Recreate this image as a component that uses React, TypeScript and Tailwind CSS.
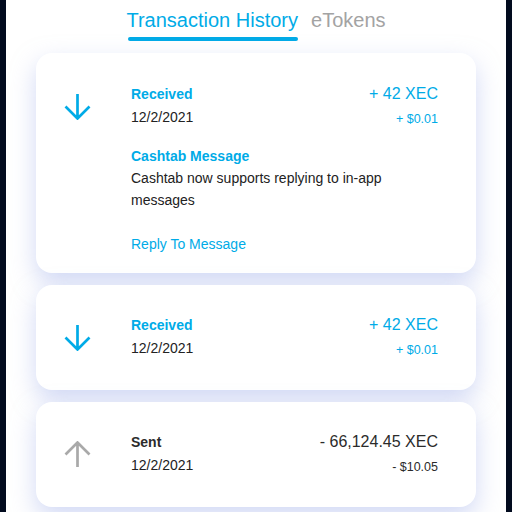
import React from "react";

type Tx = {
  kind: "received" | "sent";
  date: string;
  amount: string;
  fiat: string;
  message?: string;
};

const txs: Tx[] = [
  {
    kind: "received",
    date: "12/2/2021",
    amount: "+ 42 XEC",
    fiat: "+ $0.01",
    message: "Cashtab now supports replying to in-app messages",
  },
  { kind: "received", date: "12/2/2021", amount: "+ 42 XEC", fiat: "+ $0.01" },
  { kind: "sent", date: "12/2/2021", amount: "- 66,124.45 XEC", fiat: "- $10.05" },
];

function Arrow({ up }: { up?: boolean }) {
  return (
    <svg width="27" height="27" viewBox="0 0 27 27" fill="none" className={up ? "rotate-180" : ""}>
      <path
        d="M13.5 1v24.5M1.5 13.5l12 12 12-12"
        stroke={up ? "#a9a9a9" : "#00abe7"}
        strokeWidth="2.7"
        strokeLinejoin="miter"
      />
    </svg>
  );
}

function TxCard({ tx }: { tx: Tx }) {
  const received = tx.kind === "received";
  return (
    <div
      className={`bg-white rounded-2xl shadow-[0_10px_24px_rgba(165,180,235,0.5)] pl-[28px] pr-[38px] ${
        tx.message ? "pt-[30px] pb-[18px]" : "py-[29px]"
      }`}
    >
      {/* 顶部行 */}
      <div className="flex items-center">
        <div className="w-[27px] flex justify-center">
          <Arrow up={!received} />
        </div>
        <div className="ml-[40px] flex-1 flex items-start justify-between">
          <div className="text-[14px] leading-[23px]">
            <div className={`font-bold ${received ? "text-[#00abe7]" : "text-[#2b2b2b]"}`}>
              {received ? "Received" : "Sent"}
            </div>
            <div className="text-[#222]">{tx.date}</div>
          </div>
          <div className={`text-right ${received ? "text-[#00abe7]" : "text-[#2b2b2b]"}`}>
            <div className="text-[16px] leading-[22px]">{tx.amount}</div>
            <div className="text-[12.5px] leading-[22px] mt-[3px]">{tx.fiat}</div>
          </div>
        </div>
      </div>

      {/* 消息 */}
      {tx.message && (
        <div className="ml-[67px] mt-[15px] text-[14px] leading-[22px]">
          <div className="font-bold text-[#00abe7]">Cashtab Message</div>
          <div className="text-[#222]">{tx.message}</div>
          <div className="mt-[22px] text-[#00abe7]">Reply To Message</div>
        </div>
      )}
    </div>
  );
}

export default function App() {
  return (
    <div
      className="w-[512px] h-[512px] overflow-hidden bg-[#020b1e] flex justify-center"
      style={{ fontFamily: '"Liberation Sans", Arial, sans-serif' }}
    >
      <div className="w-[500px] h-full bg-white">
        {/* 标签 */}
        <div className="pt-[8px] flex justify-center gap-[13px] text-[20px] leading-[24px]">
          <div className="flex flex-col">
            <span className="text-[#00abe7]">Transaction History</span>
            <span className="mt-[5px] ml-[2px] h-[4px] rounded-full bg-[#00abe7]" />
          </div>
          <span className="text-[#a3a3a3]">eTokens</span>
        </div>

        {/* 交易列表 */}
        <div className="mt-[12px] px-[30px] flex flex-col gap-[12px]">
          {txs.map((tx, i) => (
            <TxCard key={i} tx={tx} />
          ))}
        </div>
      </div>
    </div>
  );
}
